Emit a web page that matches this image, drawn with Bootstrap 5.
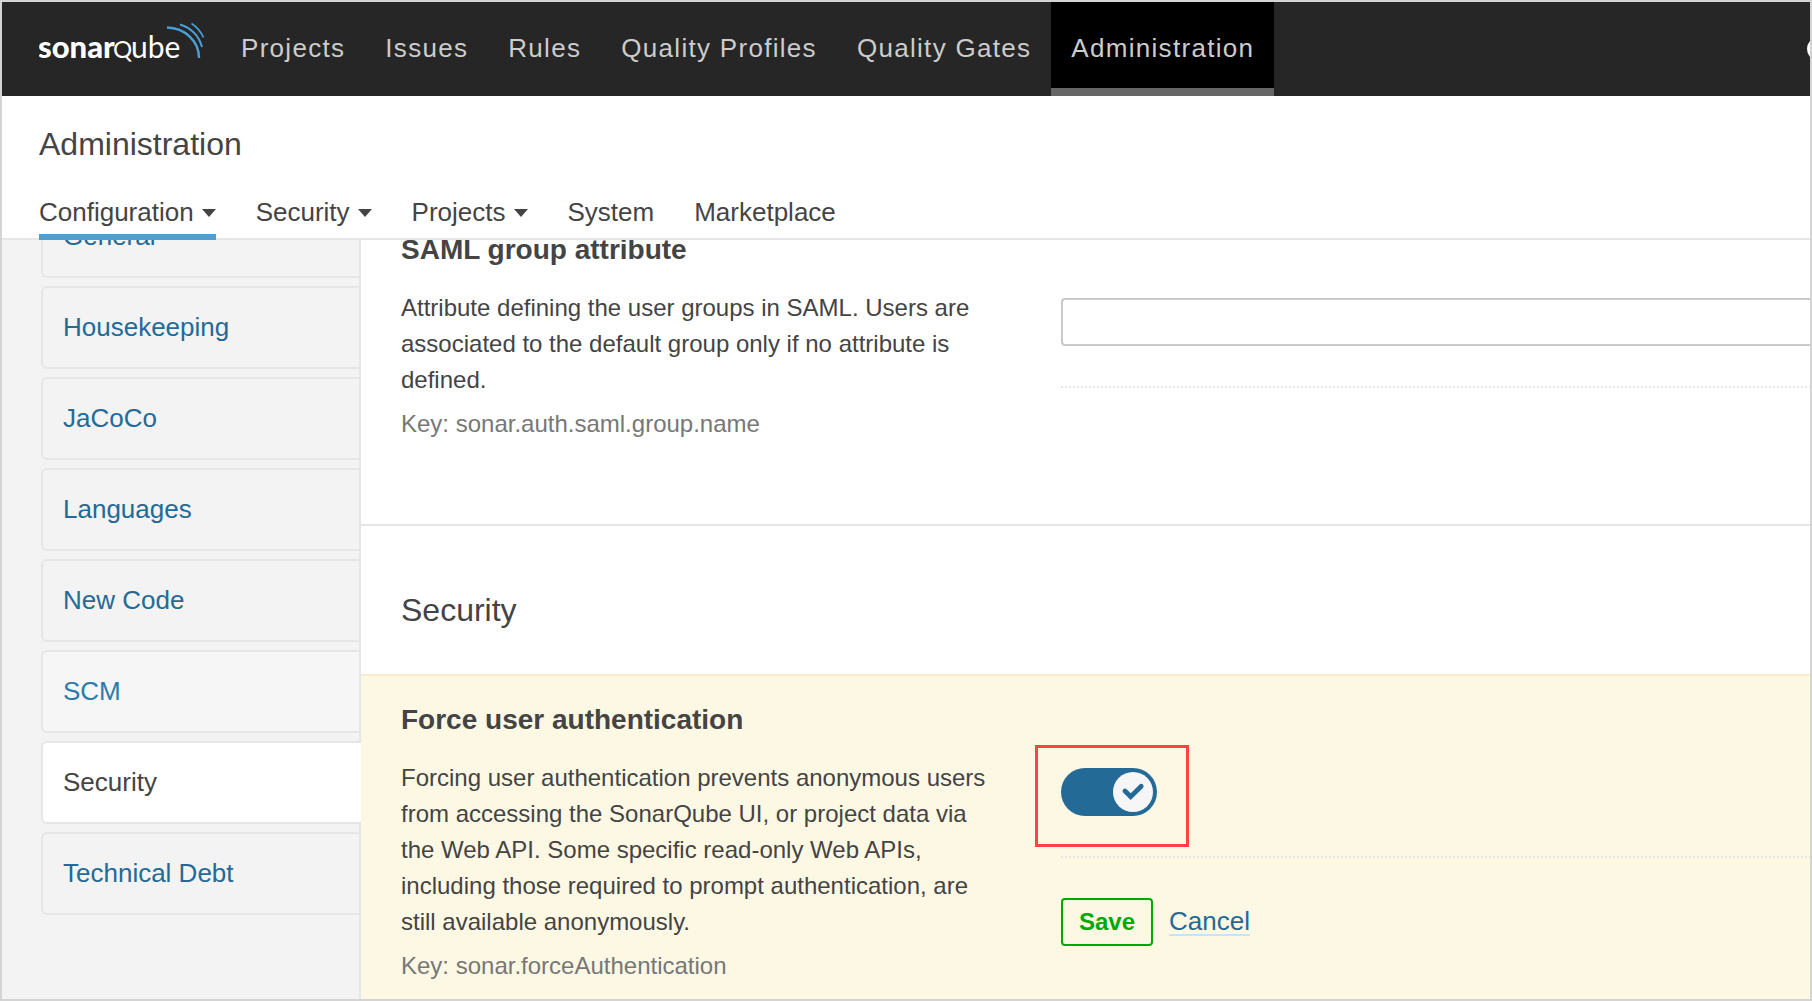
<!DOCTYPE html>
<html lang="en">
<head>
<meta charset="utf-8">
<meta name="viewport" content="width=device-width, initial-scale=1">
<title>Administration - SonarQube</title>
<link href="https://cdn.jsdelivr.net/npm/bootstrap@5.3.0/dist/css/bootstrap.min.css" rel="stylesheet">
<style>
  body { font-family: "Liberation Sans", Arial, sans-serif; font-size: 26px; line-height: 36px; color: #444; }
  a { text-decoration: none; }
  .app-frame { border: 2px solid #d4d4d4; background: #fff; }

  .global-nav { background: #262626; padding: 0 0 0 37px; min-height: 94px; }
  .global-nav .navbar-brand { width: 168px; margin: 0 14px 0 0; padding: 16px 0 0; line-height: 1; }
  .global-nav .navbar-nav .nav-link { color: #ccc; padding: 28px 20px 22px; border-bottom: 8px solid transparent; letter-spacing: .05em; }
  .global-nav .navbar-nav .nav-link.active { background: #000; border-bottom-color: #666; color: #ccc; }
  .help-link { margin-right: -21px; }

  .context-nav { padding: 30px 37px 0; border-bottom: 2px solid #e6e6e6; }
  .context-nav h1 { font-size: 32px; line-height: 36px; margin: 0 0 32px; font-weight: 400; }
  .context-tabs { gap: 40px; margin-bottom: -2px; }
  .context-tabs .nav-link { color: #444; padding: 0 0 4px; border-bottom: 6px solid transparent; }
  .context-tabs .nav-link.active { border-bottom-color: #4b9fd5; }
  .context-tabs .dropdown-toggle::after { border-width: 8px 7px 0; margin-left: 8px; vertical-align: 4px; }

  .settings-side { width: 359px; padding-left: 39px; background: #f3f3f3; border-right: 2px solid #e6e6e6; }
  .side-menu { gap: 8px; margin-top: -45px; }
  .side-menu .nav-link { color: #236a97; background: #f3f3f3; border: 2px solid #e6e6e6; border-right: 0; border-radius: 6px 0 0 6px; padding: 21px 20px 22px; }
  .side-menu .nav-link.hovered { background: #f6f6f6; color: #2d7bab; }
  .side-menu .nav-link.active { background: #fff; color: #444; margin-right: -2px; }

  .setting { padding: 25px 0 50px 40px; gap: 60px; }
  .setting-first { margin-top: -34px; padding-bottom: 82px; }
  .setting-about { width: 600px; font-size: 24px; }
  .setting-about h3 { font-size: 28px; line-height: 38px; font-weight: 700; margin: 0 0 21px; }
  .setting-about p { margin: 0 0 8px; }
  .setting-key { color: #777; }
  .setting-value { padding-top: 67px; }
  .setting-value .form-control { height: 48px; border: 2px solid #cacaca; border-right: 0; border-radius: 4px 0 0 4px; }
  .value-rule { height: 2px; margin: 40px 0; background: repeating-linear-gradient(90deg, #e6e6e6 0 2px, transparent 2px 4px); }
  .section-title { border-top: 2px solid #e6e6e6; padding: 66px 40px 46px; }
  .section-title h2 { font-size: 32px; line-height: 36px; font-weight: 400; margin: 0; }
  .setting-changed { background: #fdf8e4; border-top: 2px solid #faebcc; }

  .toggle-btn { width: 96px; height: 48px; border: 0; border-radius: 24px; padding: 4px; background: #236a97; }
  .toggle-knob { width: 40px; height: 40px; border-radius: 50%; background: #f6f6f6; }
  .callout-box { inset: -23px -32px -31px -26px; border: 3px solid #ff4343; pointer-events: none; }
  .btn-save { height: 48px; padding: 4px 16px; font-size: 24px; line-height: 36px; font-weight: 700; color: #0a0; border: 2px solid #0a0; border-radius: 4px; }
  .cancel-link { color: #236a97; line-height: 26px; border-bottom: 2px solid #cae3f2; }
</style>
</head>
<body>
<div class="app-frame vh-100 d-flex flex-column overflow-hidden">
  <nav class="global-nav navbar navbar-expand d-flex align-items-stretch flex-shrink-0" aria-label="Global">
    <a class="navbar-brand" href="#" aria-label="sonarqube">
      <svg width="168" height="50" viewBox="0 0 168 50" aria-hidden="true">
        <g fill="#fff" font-family="Lato, sans-serif">
          <text x="-1" y="40" font-size="31" font-weight="900">sonar</text>
          <text x="74" y="40" font-size="24">Q</text>
          <text x="92" y="40" font-size="30">ube</text>
        </g>
        <g fill="none" stroke="#4b9fd5">
          <path d="M128 9.500C146 10 160 23 160 40" stroke-width="2.400"/>
          <path d="M141 6.500C152 10 160 18 163 29" stroke-width="2"/>
          <path d="M152.500 5.500C158 9 162 14 164.500 19.500" stroke-width="1.700"/>
        </g>
      </svg>
    </a>
    <div class="navbar-nav">
      <a class="nav-link" href="#">Projects</a>
      <a class="nav-link" href="#">Issues</a>
      <a class="nav-link" href="#">Rules</a>
      <a class="nav-link" href="#">Quality Profiles</a>
      <a class="nav-link" href="#">Quality Gates</a>
      <a class="nav-link active" href="#" aria-current="page">Administration</a>
    </div>
    <a class="help-link ms-auto d-flex align-items-center" href="#" aria-label="Help">
      <svg width="24" height="24" viewBox="0 0 24 24" aria-hidden="true"><circle cx="12" cy="12" r="12" fill="#fff"/><path d="M8 9a4 4 0 1 1 5.500 3.700c-1 .5-1.500 1-1.500 2.300M12 17v2" fill="none" stroke="#262626" stroke-width="2.500"/></svg>
    </a>
  </nav>

  <header class="context-nav flex-shrink-0">
    <h1>Administration</h1>
    <nav class="context-tabs nav position-relative" aria-label="Administration">
      <a class="nav-link dropdown-toggle active" href="#" role="button" data-bs-toggle="dropdown">Configuration</a>
      <a class="nav-link dropdown-toggle" href="#" role="button" data-bs-toggle="dropdown">Security</a>
      <a class="nav-link dropdown-toggle" href="#" role="button" data-bs-toggle="dropdown">Projects</a>
      <a class="nav-link" href="#">System</a>
      <a class="nav-link" href="#">Marketplace</a>
    </nav>
  </header>

  <div class="d-flex flex-grow-1 overflow-hidden">
    <aside class="settings-side flex-shrink-0">
      <nav class="side-menu nav flex-column" aria-label="Settings categories">
        <a class="nav-link" href="#">General</a>
        <a class="nav-link" href="#">Housekeeping</a>
        <a class="nav-link" href="#">JaCoCo</a>
        <a class="nav-link" href="#">Languages</a>
        <a class="nav-link" href="#">New Code</a>
        <a class="nav-link hovered" href="#">SCM</a>
        <a class="nav-link active" href="#" aria-current="page">Security</a>
        <a class="nav-link" href="#">Technical Debt</a>
      </nav>
    </aside>

    <main class="flex-grow-1 overflow-hidden">
      <section class="setting setting-first d-flex">
        <div class="setting-about flex-shrink-0">
          <h3 id="samlGroup">SAML group attribute</h3>
          <p>Attribute defining the user groups in SAML. Users are associated to the default group only if no attribute is defined.</p>
          <div class="setting-key">Key: sonar.auth.saml.group.name</div>
        </div>
        <div class="setting-value flex-grow-1">
          <input class="form-control" type="text" aria-labelledby="samlGroup">
          <div class="value-rule"></div>
        </div>
      </section>

      <div class="section-title"><h2>Security</h2></div>

      <section class="setting setting-changed d-flex">
        <div class="setting-about flex-shrink-0">
          <h3 id="forceAuth">Force user authentication</h3>
          <p>Forcing user authentication prevents anonymous users from accessing the SonarQube UI, or project data via the Web API. Some specific read-only Web APIs, including those required to prompt authentication, are still available anonymously.</p>
          <div class="setting-key">Key: sonar.forceAuthentication</div>
        </div>
        <div class="setting-value flex-grow-1">
          <div class="d-flex">
            <div class="position-relative">
              <button class="toggle-btn d-flex justify-content-end" type="button" role="switch" aria-checked="true" aria-labelledby="forceAuth">
                <span class="toggle-knob d-flex">
                  <svg width="40" height="40" viewBox="0 0 40 40" aria-hidden="true"><path d="M12 19l5.700 5.700L28.200 14.200" fill="none" stroke="#236a97" stroke-width="4.800" stroke-linecap="round"/></svg>
                </span>
              </button>
              <div class="callout-box position-absolute"></div>
            </div>
          </div>
          <div class="value-rule"></div>
          <div class="d-flex align-items-center gap-3">
            <button class="btn btn-save" type="button">Save</button>
            <a class="cancel-link" href="#">Cancel</a>
          </div>
        </div>
      </section>
    </main>
  </div>
</div>
<script src="https://cdn.jsdelivr.net/npm/bootstrap@5.3.0/dist/js/bootstrap.bundle.min.js"></script>
</body>
</html>
